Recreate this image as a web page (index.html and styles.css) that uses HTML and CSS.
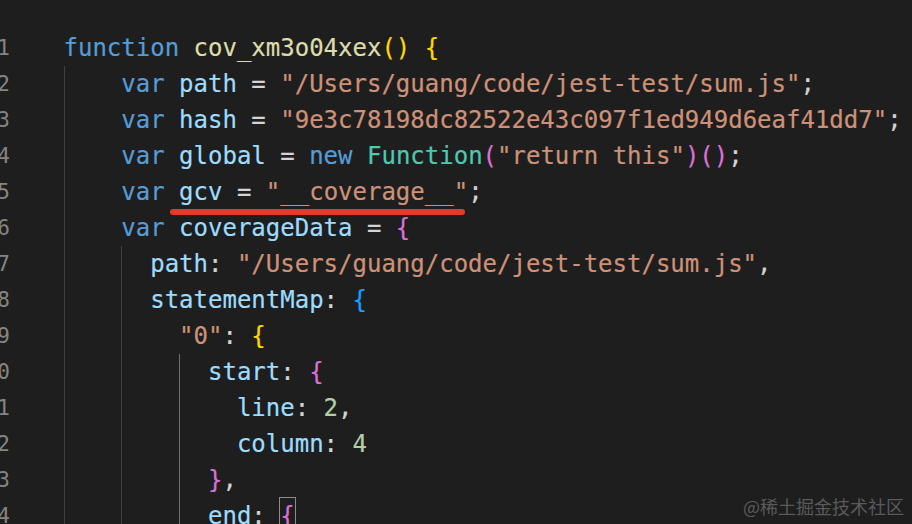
FILE: index.html
```html
<!DOCTYPE html>
<html>
<head>
<meta charset="utf-8">
<link rel="stylesheet" href="styles.css">
</head>
<body>
<div class="editor">
  <div class="gutter">
    <div>1</div><div>2</div><div>3</div><div>4</div><div>5</div><div>6</div><div>7</div>
    <div>8</div><div>9</div><div>10</div><div>11</div><div>12</div><div>13</div><div>14</div>
  </div>
  <div class="code">
<div class="ln"><span class="kw">function</span> <span class="fn">cov_xm3o04xex</span><span class="b1">()</span> <span class="b1">{</span></div>
<div class="ln"><span class="g g4"> </span><span class="kw">var</span> <span class="v">path</span> = <span class="s">"/Users/guang/code/jest-test/sum.js"</span>;</div>
<div class="ln"><span class="g g4"> </span><span class="kw">var</span> <span class="v">hash</span> = <span class="s">"9e3c78198dc82522e43c097f1ed949d6eaf41dd7"</span>;</div>
<div class="ln"><span class="g g4"> </span><span class="kw">var</span> <span class="v">global</span> = <span class="kw">new</span> <span class="cls">Function</span><span class="b2">(</span><span class="s">"return this"</span><span class="b2">)()</span>;</div>
<div class="ln"><span class="g g4"> </span><span class="kw">var</span> <span class="v">gcv</span> = <span class="s">"__coverage__"</span>;</div>
<div class="ln"><span class="g g4"> </span><span class="kw">var</span> <span class="v">coverageData</span> = <span class="b2">{</span></div>
<div class="ln"><span class="g g4"> </span><span class="g g2"> </span><span class="v">path</span>: <span class="s">"/Users/guang/code/jest-test/sum.js"</span>,</div>
<div class="ln"><span class="g g4"> </span><span class="g g2"> </span><span class="v">statementMap</span>: <span class="b3">{</span></div>
<div class="ln"><span class="g g4"> </span><span class="g g4"> </span><span class="s">"0"</span>: <span class="b1">{</span></div>
<div class="ln"><span class="g g4"> </span><span class="g g4"> </span><span class="g g2 act"> </span><span class="v">start</span>: <span class="b2">{</span></div>
<div class="ln"><span class="g g4"> </span><span class="g g4"> </span><span class="g g4 act"> </span><span class="v">line</span>: <span class="num">2</span>,</div>
<div class="ln"><span class="g g4"> </span><span class="g g4"> </span><span class="g g4 act"> </span><span class="v">column</span>: <span class="num">4</span></div>
<div class="ln"><span class="g g4"> </span><span class="g g4"> </span><span class="g g2 act"> </span><span class="b2">}</span>,</div>
<div class="ln"><span class="g g4"> </span><span class="g g4"> </span><span class="g g2 act"> </span><span class="v">end</span>: <span class="b2 match">{</span></div>
  </div>
</div>
<div class="mark"></div>
<div class="wm">@稀土掘金技术社区</div>
</body>
</html>
```
FILE: styles.css
```css
html, body {
  margin: 0;
  padding: 0;
  background: #1e1e1e;
  width: 912px;
  height: 524px;
  overflow: hidden;
}
body {
  position: relative;
}
.editor {
  display: flex;
  padding-top: 30px;
  font-family: "DejaVu Sans Mono", "Liberation Mono", monospace;
}
.gutter {
  width: 44px;
  margin-left: -34px;
  margin-right: 53px;
  text-align: right;
  color: #858585;
  font-size: 21px;
  line-height: 36px;
  flex: none;
}
.code {
  font-size: 24px;
  line-height: 36px;
  color: #d4d4d4;
  padding-left: 0.5px;
  -webkit-text-stroke: 0.2px;
}
.ln {
  height: 36px;
  white-space: pre;
}
.g {
  display: inline-block;
  height: 36px;
  vertical-align: top;
  box-shadow: inset 1px 0 0 #404040;
}
.g.act {
  box-shadow: inset 1px 0 0 #707070;
}
.g4 { width: 4ch; }
.g2 { width: 2ch; }
.kw { color: #569cd6; }
.fn { color: #dcdcaa; }
.v { color: #9cdcfe; }
.s { color: #ce9178; }
.cls { color: #4ec9b0; }
.num { color: #b5cea8; }
.b1 { color: #ffd700; }
.b2 { color: #da70d6; }
.b3 { color: #179fff; }
.match {
  display: inline-block;
  height: 36px;
  vertical-align: top;
  box-shadow: 0 0 0 1px #8b8b8b;
}
.mark {
  position: absolute;
  left: 170px;
  top: 209px;
  width: 295px;
  height: 6px;
  border-radius: 3px;
  background: #e33b2b;
}
.wm {
  position: absolute;
  right: 8px;
  bottom: 4px;
  font-family: "Noto Sans CJK SC", sans-serif;
  font-size: 18px;
  line-height: 28px;
  color: #5a5a5a;
}
```
